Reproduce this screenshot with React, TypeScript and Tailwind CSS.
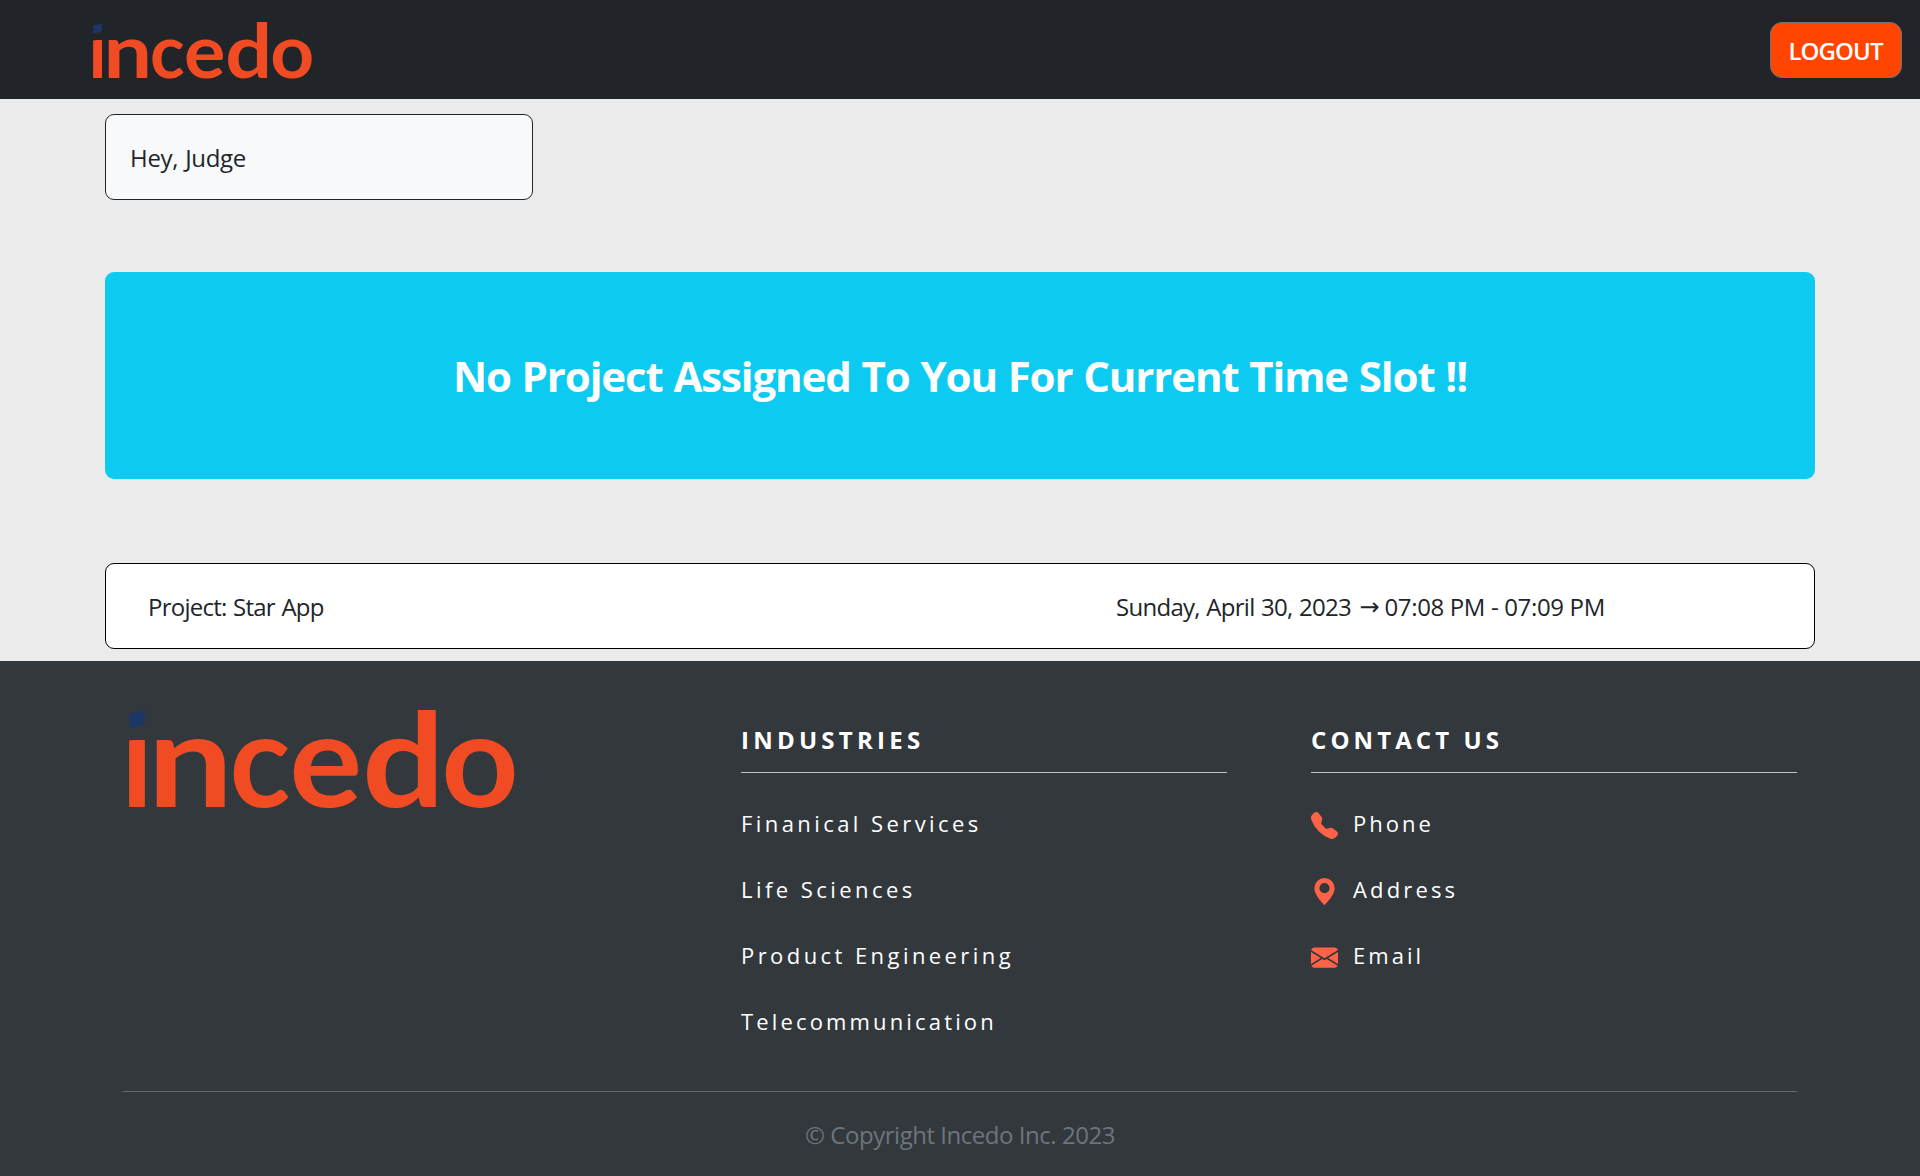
import { BsEnvelopeFill, BsGeoAltFill, BsTelephoneFill } from "react-icons/bs";

const WORDMARK = [
  { char: "n", x: 18.4, stretch: 1.168 },
  { char: "c", x: 100.6, stretch: 0.973 },
  { char: "e", x: 160.3, stretch: 1.05 },
  { char: "d", x: 233, stretch: 1.12 },
  { char: "o", x: 312.3, stretch: 1.038 },
];

const INDUSTRIES = [
  { label: "Finanical Services", tracking: "tracking-[3.43px]" },
  { label: "Life Sciences", tracking: "tracking-[3.45px]" },
  { label: "Product Engineering", tracking: "tracking-[3.43px]" },
  { label: "Telecommunication", tracking: "tracking-[3.15px]" },
];

const CONTACTS = [
  { label: "Phone", Icon: BsTelephoneFill, tracking: "tracking-[3px]" },
  { label: "Address", Icon: BsGeoAltFill, tracking: "tracking-[3.14px]" },
  { label: "Email", Icon: BsEnvelopeFill, tracking: "tracking-[3.05px]" },
];

function Logo({ id, className }: { id: string; className: string }) {
  return (
    <svg viewBox="0 0 386 98" className={`overflow-visible ${className}`} role="img" aria-label="incedo">
      <defs>
        <clipPath id={id}>
          <polygon points="-10,31.5 8.6,29.5 30,24.8 30,110 -10,110" />
        </clipPath>
      </defs>
      <polygon points="0.3,4 15.7,0.5 15.7,14.5 0.3,18.5" fill="#1c3766" />
      <g fill="#f04b23" className="font-['Lato'] text-[130px] font-bold">
        <g clipPath={`url(#${id})`}>
          <text transform="translate(-8 96.7) scale(0.97 1)">i</text>
        </g>
        {WORDMARK.map(({ char, x, stretch }) => (
          <text key={char} transform={`translate(${x} 96.7) scale(${stretch} 1)`}>
            {char}
          </text>
        ))}
      </g>
    </svg>
  );
}

export default function App() {
  return (
    <div className="flex h-[1176px] w-full flex-col bg-[#ebebeb] font-['Open_Sans',sans-serif] text-2xl leading-9 text-[#212529]">
      <header className="flex h-[99px] shrink-0 items-start justify-between bg-[#212529] pt-[22px] pr-[18px] pl-[93px]">
        <Logo id="nav-mark" className="mt-px h-[56px] w-[219px]" />
        <button className="h-14 w-[132px] rounded-xl border border-[#6c757d] bg-[#ff4500] pt-0.5 pr-px text-center font-semibold tracking-[-0.91px] text-white">
          LOGOUT
        </button>
      </header>

      <main className="flex h-[562px] shrink-0 flex-col px-[105px] pt-[15px]">
        <section className="h-[86px] w-[428px] rounded-[9px] border border-[#212529] bg-[#f8f9fa] px-6 pt-[25px]">
          <p className="tracking-[-0.3px] [word-spacing:1px]">Hey, Judge</p>
        </section>
        <section className="mt-[72px] flex h-[207px] items-center justify-center rounded-[9px] bg-[#0dcaf0]">
          <h1 className="pt-px text-[42px] leading-[54px] font-bold tracking-[-1.12px] whitespace-nowrap text-white [word-spacing:1px]">
            No Project Assigned To You For Current Time Slot !!
          </h1>
        </section>
        <section className="mt-[84px] grid h-[86px] grid-cols-[968px_1fr] rounded-[9px] border border-black bg-white pt-[25px] pl-[42px]">
          <p className="tracking-[-0.75px] [word-spacing:1px]">Project: Star App</p>
          <p className="flex whitespace-pre">
            <span className="pr-0.5 tracking-[-0.72px] [word-spacing:1px]">Sunday, April 30, 2023 </span>
            <span className="w-[19px] font-['DejaVu_Sans']">→</span>
            <span className="tracking-[-0.35px]"> 07:08 PM - 07:09 PM</span>
          </p>
        </section>
      </main>

      <footer className="flex-1 bg-[#33383c] px-[123px] text-white">
        <div className="flex h-[431px] border-b border-[#666a6d]">
          <div className="w-[618px] pt-[49px] pl-[6px]">
            <Logo id="footer-mark" className="h-[98px] w-[386px]" />
          </div>
          <div className="mr-[84px] w-[486px] pt-[61px]">
            <h2 className="h-[51px] border-b border-[#c2c3c5] font-bold tracking-[4.25px]">INDUSTRIES</h2>
            <ul className="pt-[34px] text-[22px] leading-[33px]">
              {INDUSTRIES.map(({ label, tracking }) => (
                <li key={label} className={`h-[66px] ${tracking}`}>{label}</li>
              ))}
            </ul>
          </div>
          <div className="w-[486px] pt-[61px]">
            <h2 className="h-[51px] border-b border-[#c2c3c5] font-bold tracking-[4.1px]">CONTACT US</h2>
            <ul className="pt-[34px] text-[22px] leading-[33px]">
              {CONTACTS.map(({ label, Icon, tracking }) => (
                <li key={label} className={`flex h-[66px] ${tracking}`}>
                  <Icon className="mt-[5px] mr-[15px] size-[27px] text-[#ff6347]" />
                  {label}
                </li>
              ))}
            </ul>
          </div>
        </div>
        <p className="pt-[25px] text-center tracking-[-0.47px] text-[#6c757d]">© Copyright Incedo Inc. 2023</p>
      </footer>
    </div>
  );
}
